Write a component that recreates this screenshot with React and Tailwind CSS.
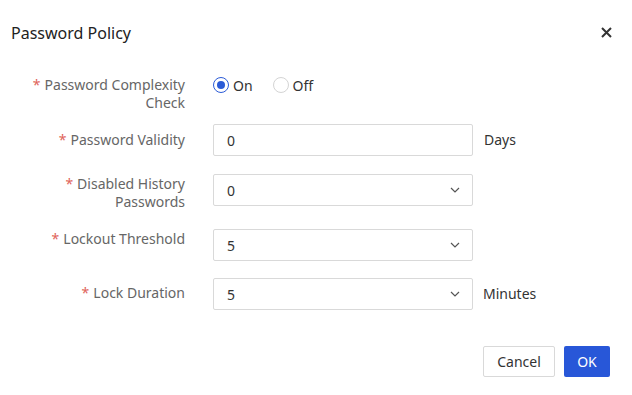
import React, { useState } from 'react';

const FONT = { fontFamily: '"Noto Sans", "Liberation Sans", Arial, sans-serif' };

const Chevron = () => (
  <svg width="10" height="6" viewBox="0 0 10 6" fill="none" className="text-[#555]">
    <path d="M1 1l4 4 4-4" stroke="currentColor" strokeWidth="1.2" />
  </svg>
);

const Label = ({ children, className = '' }) => (
  <div className={`w-[185px] shrink-0 text-right text-[14px] leading-[18px] text-[#666] ${className}`}>
    <span className="text-[#e0645a] mr-1">*</span>
    {children}
  </div>
);

const Field = ({ value, select }) => (
  <div className="w-[260px] h-[32px] border border-[#d9d9d9] rounded-[2px] bg-white flex items-center justify-between pl-[13px] pr-[12px] text-[14px] text-[#333]">
    <span>{value}</span>
    {select && <Chevron />}
  </div>
);

const Radio = ({ checked, label, onClick }) => (
  <button onClick={onClick} className="flex items-center gap-[4px] text-[14px] text-[#333]">
    <span
      className={`w-[16px] h-[16px] rounded-full border flex items-center justify-center bg-white ${
        checked ? 'border-[#2b5bd7]' : 'border-[#d4d4d4]'
      }`}
    >
      {checked && <span className="w-[8px] h-[8px] rounded-full bg-[#2b5bd7]" />}
    </span>
    {label}
  </button>
);

export default function App() {
  const [complexity, setComplexity] = useState(true);

  return (
    <div className="w-[632px] h-[395px] bg-white relative" style={FONT}>
      {/* header */}
      <div className="flex items-center justify-between pl-[11px] pr-[20px] pt-[22px] h-[44px]">
        <span className="text-[16px] text-[#222]">Password Policy</span>
        <button className="text-[#333] -mt-[2px]">
          <svg width="11" height="11" viewBox="0 0 11 11">
            <path d="M1 1l9 9M10 1l-9 9" stroke="currentColor" strokeWidth="2" />
          </svg>
        </button>
      </div>

      {/* form */}
      <div className="flex flex-col pt-[32px]">
        <div className="flex items-start gap-[28px]">
          <Label>
            Password Complexity
            <br />
            Check
          </Label>
          <div className="flex items-center gap-[20px] h-[18px]">
            <Radio checked={complexity} label="On" onClick={() => setComplexity(true)} />
            <Radio checked={!complexity} label="Off" onClick={() => setComplexity(false)} />
          </div>
        </div>

        <div className="flex items-start gap-[28px] mt-[12px]">
          <Label className="pt-[7px]">Password Validity</Label>
          <Field value="0" />
          <span className="text-[14px] text-[#333] -ml-[17px] leading-[32px]">Days</span>
        </div>

        <div className="flex items-start gap-[28px] mt-[18px]">
          <Label className="pt-[1px]">
            Disabled History
            <br />
            Passwords
          </Label>
          <Field value="0" select />
        </div>

        <div className="flex items-start gap-[28px] mt-[18px]">
          <Label className="pt-[1px]">Lockout Threshold</Label>
          <Field value="5" select />
        </div>

        <div className="flex items-start gap-[28px] mt-[17px]">
          <Label className="pt-[6px]">Lock Duration</Label>
          <Field value="5" select />
          <span className="text-[14px] text-[#333] -ml-[18px] leading-[32px]">Minutes</span>
        </div>
      </div>

      {/* footer */}
      <div className="flex justify-end gap-[9px] pr-[22px] mt-[36px]">
        <button className="w-[72px] h-[31px] border border-[#d9d9d9] rounded-[2px] text-[14px] text-[#333] bg-white">
          Cancel
        </button>
        <button className="w-[46px] h-[31px] rounded-[2px] text-[14px] text-white bg-[#2857d8]">OK</button>
      </div>
    </div>
  );
}
